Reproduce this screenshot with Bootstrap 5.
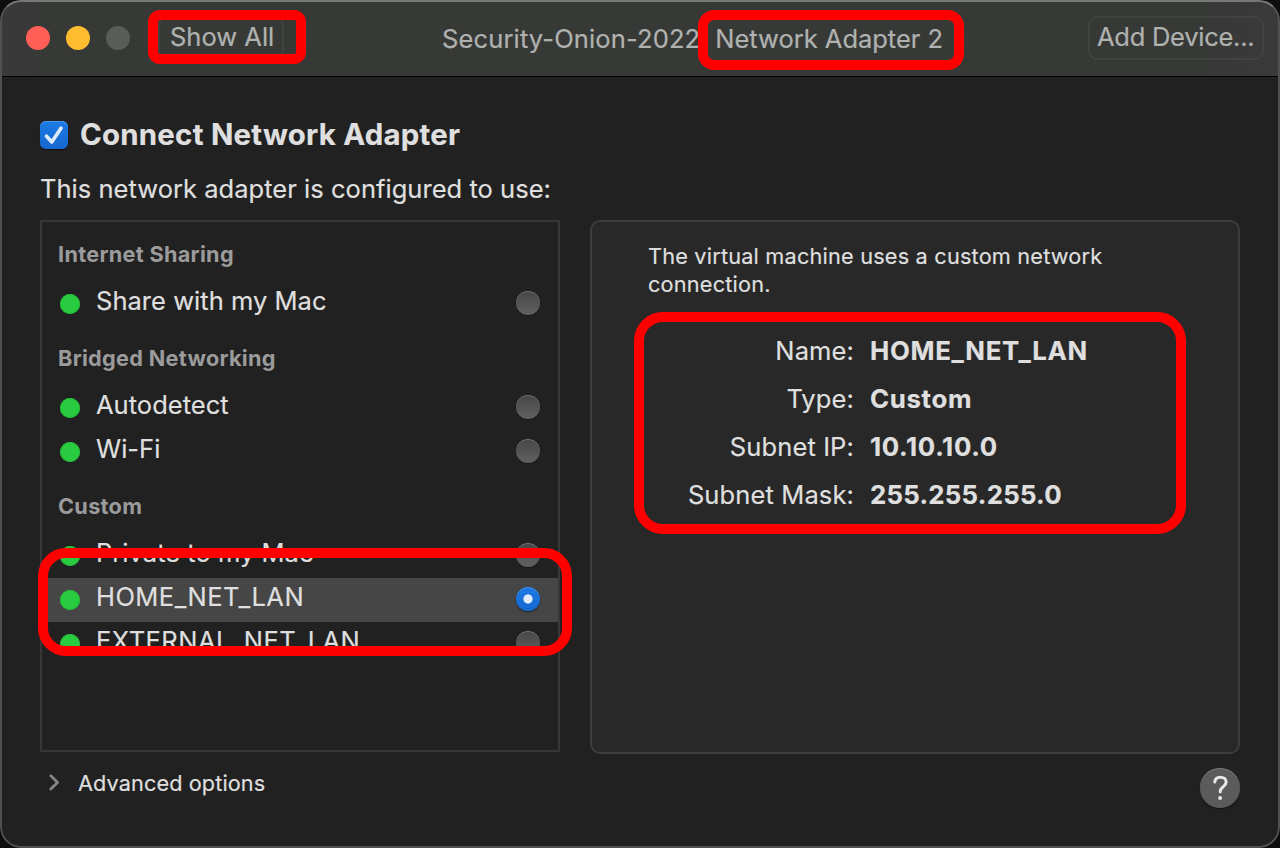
<!DOCTYPE html>
<html lang="en" data-bs-theme="dark">
<head>
<meta charset="utf-8">
<meta name="viewport" content="width=device-width, initial-scale=1">
<title>Network Adapter 2</title>
<link href="https://cdn.jsdelivr.net/npm/bootstrap@5.3.0/dist/css/bootstrap.min.css" rel="stylesheet">
<style>
  body { background: #0e0e0f; color: #dfdfdf; font-family: Inter, "Liberation Sans", sans-serif; font-size: 25.5px; line-height: 30px; letter-spacing: .03px; -webkit-text-stroke: .2px currentColor; }
  .window { height: 848px; background: #212121; border-radius: 21px; }
  .window-edge { inset: 0; border: 2px solid #505050; border-top-color: #777977; border-radius: 21px; pointer-events: none; }
  .titlebar { height: 77px; background: linear-gradient(90deg, #393939, #373937 3%, #373937 94%, #3a3a39); border-bottom: 1px solid #000; color: #b0b2b0; }
  .light { width: 24px; height: 24px; border-radius: 50%; margin-top: 2px; }
  .tool { height: 44px; border: 2px solid #414341; border-radius: 9px; line-height: 30px; padding: 4px 8px 0; }
  .tool-all { width: 126px; margin-left: 28px; padding-left: 10px; letter-spacing: 0; }
  .tool-add { width: 176px; letter-spacing: -.26px; padding-left: 7px; }
  .caption { line-height: 30px; padding-top: 8px; margin-left: 158px; }
  .caption .vm { letter-spacing: .14px; }
  .caption .device { margin-left: 15px; letter-spacing: -.02px; }

  /* red marker outlines laid over the content */
  .ring { border: 10px solid #f00; pointer-events: none; }
  .ring-all { left: 148px; top: 10px; width: 158px; height: 54px; border-radius: 12px; }
  .ring-title { left: 256px; top: -6px; width: 266px; height: 60px; border-radius: 16px; }
  .ring-list { left: -4px; right: -14px; top: -30px; height: 108px; border-radius: 28px; }
  .ring-info { left: 42px; right: 52px; top: 90px; height: 222px; border-radius: 29px; }

  .content { padding: 38px 40px 0; }
  .check { width: 28px; height: 28px; border-radius: 6px; background: linear-gradient(#1c7ae5, #1668cf); box-shadow: 0 1px 1px #0008, inset 0 1px 0 #4a95ec; }
  .heading { font-size: 29.4px; line-height: 40px; font-weight: 700; letter-spacing: .25px; color: #dfdfdf; }
  .intro { margin-top: 19px; }
  .pane-list { width: 520px; height: 532px; border: 2px solid #373737; padding-top: 16px; }
  .group { font-size: 21.7px; font-weight: 700; line-height: 32px; letter-spacing: .3px; color: #9b9b9b; padding-left: 16px; -webkit-text-stroke: 0; }
  .group-gap { margin-top: 16px; }
  .net { height: 44px; padding: 0 18px; line-height: 38px; }
  .net-first { margin-top: 12px; }
  .net .dot { width: 20px; height: 20px; border-radius: 50%; background: #29cb41; margin-right: 16px; margin-top: 12px; box-shadow: inset 0 0 0 1px #25b93b; }
  .net .knob { width: 24px; height: 24px; border-radius: 50%; background: linear-gradient(#464646, #616161); box-shadow: 0 1px 1px #0006, inset 0 1px 0 #6c6c6c; margin-top: 9px; }
  .net.chosen { background: #464646; }
  .net.chosen .knob { background: radial-gradient(circle, #dfebfa 4.2px, transparent 5px), linear-gradient(#1c7ae5, #1668cf); box-shadow: 0 1px 2px #0008, inset 0 1px 0 #4a95ec; }
  .caps { letter-spacing: .46px; }
  .pane-info { width: 650px; height: 534px; border: 2px solid #3d3d3d; border-radius: 10px; background: #282828; }
  .note { font-size: 21.7px; line-height: 28px; letter-spacing: .2px; padding: 20px 56px 0; }
  .facts { margin: 29px 0 0; letter-spacing: .12px; }
  .facts dt, .facts dd { line-height: 48px; margin: 0; }
  .facts dt { width: 262px; font-weight: 400; text-align: right; }
  .facts dd { font-size: 25.8px; font-weight: 700; padding-left: 16px; letter-spacing: .67px; }
  .facts .tight { letter-spacing: .27px; }
  .advanced { font-size: 21.7px; letter-spacing: .1px; line-height: 30px; padding: 14px 0 0 8px; }
  .help { width: 40px; height: 40px; border-radius: 50%; background: #5b5b5b; box-shadow: 0 1px 1px #0007, inset 0 1px 0 #767676; margin-top: 14px; }
</style>
</head>
<body>
<main class="window position-relative overflow-hidden">
  <header class="titlebar position-relative d-flex text-nowrap">
    <div class="d-flex gap-3 pt-4" style="padding-left:26px">
      <span class="light" style="background:#ff5f57"></span>
      <span class="light" style="background:#febc2e"></span>
      <span class="light" style="background:#5a5c5a"></span>
    </div>
    <div class="tool tool-all mt-3">Show All</div>
    <div class="ring ring-all position-absolute"></div>
    <div class="caption position-relative mt-3 flex-grow-1"><span class="vm">Security-Onion-2022</span><span class="device">Network Adapter 2</span>
      <div class="ring ring-title position-absolute"></div>
    </div>
    <div class="tool tool-add mt-3 me-3">Add Device...</div>
  </header>

  <div class="content">
    <div class="d-flex align-items-center">
      <span class="check d-flex align-items-center justify-content-center me-2">
        <svg width="28" height="28" viewBox="0 0 28 28" fill="none" stroke="#dfebfa" stroke-width="3.6" stroke-linecap="round" stroke-linejoin="round"><path d="M6.5 15.2 11.8 21 21 7.2"/></svg>
      </span>
      <h1 class="heading mb-0 ms-1">Connect Network Adapter</h1>
    </div>
    <p class="intro mb-0">This network adapter is configured to use:</p>

    <div class="d-flex justify-content-between" style="margin-top:16px">
      <section class="pane-list">
        <div class="group">Internet Sharing</div>
        <div class="net net-first d-flex"><span class="dot"></span><span class="flex-grow-1">Share with my Mac</span><span class="knob"></span></div>
        <div class="group group-gap">Bridged Networking</div>
        <div class="net net-first d-flex"><span class="dot"></span><span class="flex-grow-1">Autodetect</span><span class="knob"></span></div>
        <div class="net d-flex"><span class="dot"></span><span class="flex-grow-1">Wi-Fi</span><span class="knob"></span></div>
        <div class="group group-gap">Custom</div>
        <div class="net net-first d-flex"><span class="dot"></span><span class="flex-grow-1">Private to my Mac</span><span class="knob"></span></div>
        <div class="position-relative">
          <div class="net chosen d-flex"><span class="dot"></span><span class="flex-grow-1 caps">HOME_NET_LAN</span><span class="knob"></span></div>
          <div class="net d-flex"><span class="dot"></span><span class="flex-grow-1 caps">EXTERNAL_NET_LAN</span><span class="knob"></span></div>
          <div class="ring ring-list position-absolute"></div>
        </div>
      </section>

      <section class="pane-info position-relative">
        <p class="note mb-0">The virtual machine uses a custom network connection.</p>
        <dl class="facts">
          <div class="d-flex"><dt>Name:</dt><dd>HOME_NET_LAN</dd></div>
          <div class="d-flex"><dt>Type:</dt><dd>Custom</dd></div>
          <div class="d-flex"><dt>Subnet IP:</dt><dd>10.10.10.0</dd></div>
          <div class="d-flex"><dt>Subnet Mask:</dt><dd class="tight">255.255.255.0</dd></div>
        </dl>
        <div class="ring ring-info position-absolute"></div>
      </section>
    </div>

    <footer class="d-flex justify-content-between">
      <div class="advanced d-flex">
        <svg class="me-3" width="14" height="30" viewBox="0 0 14 30" fill="none" stroke="#858585" stroke-width="2.8" stroke-linecap="round" stroke-linejoin="round"><path d="M2.8 7.8 9.6 14.4 2.8 21"/></svg>
        <span>Advanced options</span>
      </div>
      <div class="help">
        <svg width="40" height="40" viewBox="0 0 40 40" fill="none" stroke="#e8e8e8" stroke-width="3" stroke-linecap="round" stroke-linejoin="round"><path d="M14.8 14c.3-3 2.3-4.800 5.500-4.800 3.400 0 5.900 1.900 5.900 4.900 0 4.600-6 4.500-6 9.600"/><circle cx="20.100" cy="30" r="2" fill="#e8e8e8" stroke="none"/></svg>
      </div>
    </footer>
  </div>
  <div class="window-edge position-absolute"></div>
</main>
<script src="https://cdn.jsdelivr.net/npm/bootstrap@5.3.0/dist/js/bootstrap.bundle.min.js"></script>
</body>
</html>
